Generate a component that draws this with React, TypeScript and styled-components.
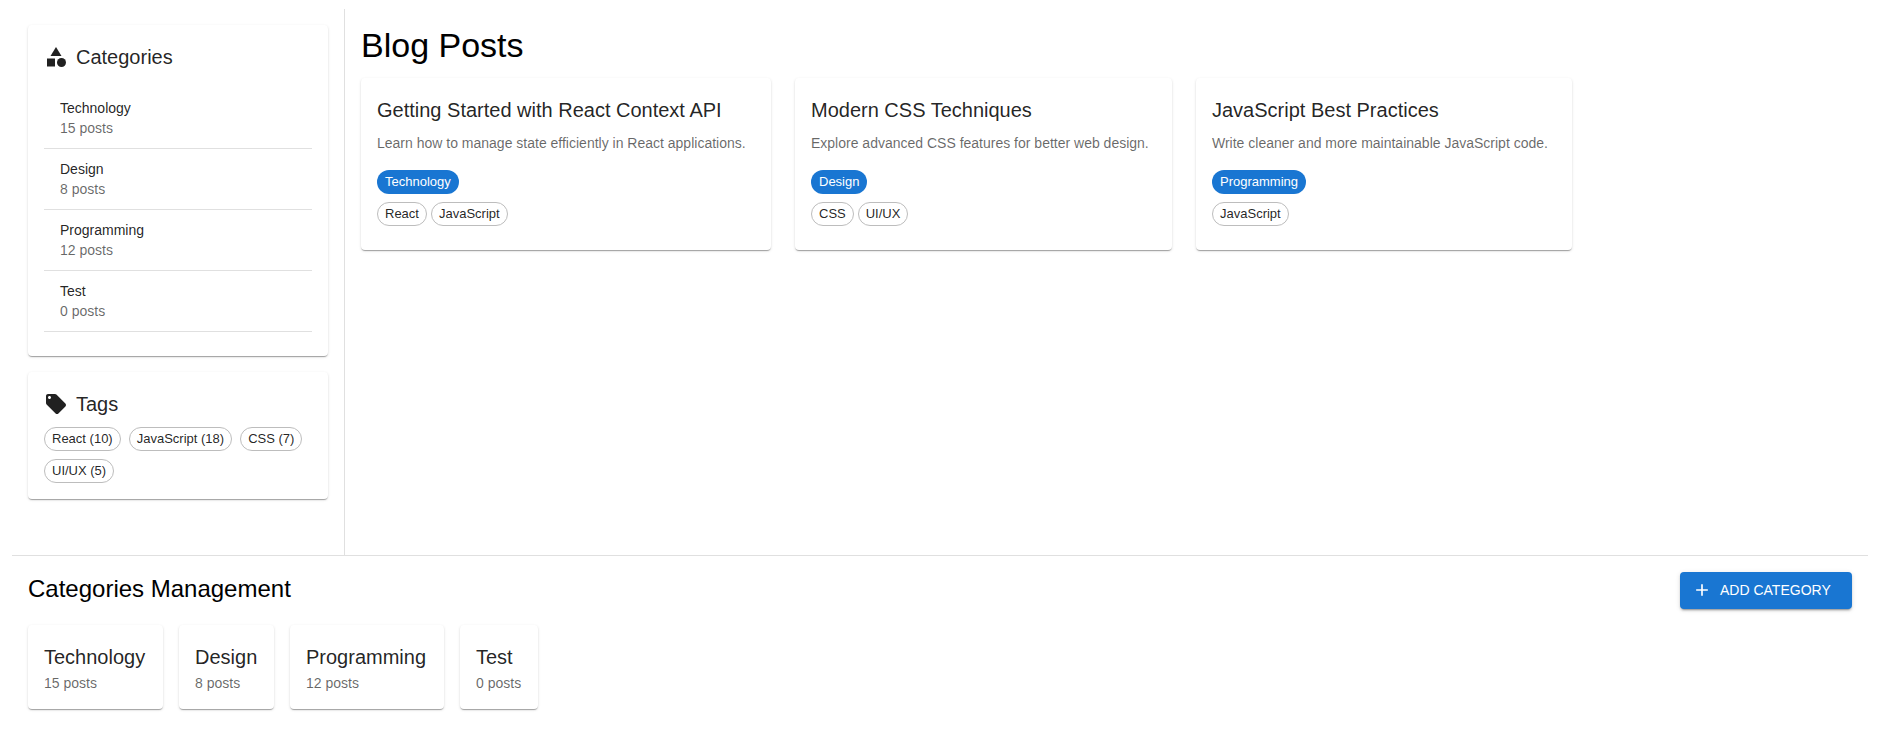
import React from "react";
import styled, { createGlobalStyle } from "styled-components";

const GlobalStyle = createGlobalStyle`
  *, *::before, *::after { box-sizing: border-box; }
  body {
    margin: 0;
    padding: 9px 10px 16px 12px;
    background: #fff;
    color: #000;
    font-family: Arial, "Liberation Sans", Helvetica, sans-serif;
    font-size: 14px;
    line-height: 20px;
  }
  h1, h2, h3, p, ul { margin: 0; padding: 0; font-weight: 400; }
  ul { list-style: none; }
`;

const TopRow = styled.div`
  display: flex;
  min-height: 546px;
`;

const Sidebar = styled.aside`
  display: flex;
  flex-direction: column;
  gap: 16px;
  flex: 0 0 333px;
  padding: 16px;
  border-right: 1px solid #e0e0e0;
`;

const Main = styled.main`
  flex: 1;
  min-width: 0;
  padding: 16px;
`;

const Card = styled.section`
  padding: 16px;
  border-radius: 4px;
  background: #fff;
  color: rgba(0, 0, 0, 0.87);
  box-shadow: 0 2px 1px -1px rgba(0, 0, 0, 0.2), 0 1px 1px 0 rgba(0, 0, 0, 0.14),
    0 1px 3px 0 rgba(0, 0, 0, 0.12);
`;

const PostCard = styled(Card).attrs({ as: "article" })<{ $width: number }>`
  flex: 0 1 ${(p) => p.$width}px;
  padding-bottom: 24px;
`;

const SummaryCard = styled(Card).attrs({ as: "li" })<{ $width: number }>`
  min-width: ${(p) => p.$width}px;
`;

const PageTitle = styled.h1`
  margin-bottom: 13px;
  font-size: 34px;
  line-height: 40px;
`;

const SectionTitle = styled.h2`
  font-size: 24px;
  line-height: 34px;
`;

const CardTitle = styled.h2<{ $gutter?: boolean }>`
  display: flex;
  align-items: center;
  gap: 8px;
  margin-bottom: ${(p) => (p.$gutter ? 7 : 0)}px;
  font-size: 20px;
  line-height: 32px;
`;

const Muted = styled.p`
  color: rgba(0, 0, 0, 0.6);
`;

const Excerpt = styled(Muted)`
  margin-bottom: 17px;
`;

const CategoryList = styled.ul`
  padding: 8px 0;
`;

const CategoryItem = styled.li`
  padding: 10px 16px;
  border-bottom: 1px solid #e0e0e0;
`;

const Icon = styled.svg<{ $size: number }>`
  flex: none;
  width: ${(p) => p.$size}px;
  height: ${(p) => p.$size}px;
  fill: currentColor;
`;

const Chips = styled.div<{ $gap: number }>`
  display: flex;
  flex-wrap: wrap;
  gap: ${(p) => p.$gap}px;
`;

const Chip = styled.span<{ $filled?: boolean }>`
  display: inline-flex;
  align-items: center;
  height: 24px;
  padding: 0 ${(p) => (p.$filled ? 8 : 7)}px;
  border: ${(p) => (p.$filled ? "none" : "1px solid #bdbdbd")};
  border-radius: 12px;
  background: ${(p) => (p.$filled ? "#1976d2" : "transparent")};
  color: ${(p) => (p.$filled ? "#fff" : "rgba(0, 0, 0, 0.87)")};
  font-size: 13px;
  white-space: nowrap;
`;

const PostLabels = styled.div`
  display: flex;
  flex-direction: column;
  align-items: flex-start;
  gap: 8px;
`;

const PostRow = styled.div`
  display: flex;
  gap: 24px;
`;

const Management = styled.section`
  padding: 16px;
  border-top: 1px solid #e0e0e0;
`;

const ManagementHeader = styled.header`
  display: flex;
  align-items: flex-start;
  justify-content: space-between;
  margin-bottom: 16px;
`;

const SummaryRow = styled.ul`
  display: flex;
  flex-wrap: wrap;
  gap: 16px;
`;

const AddButton = styled.button`
  display: inline-flex;
  align-items: center;
  gap: 8px;
  min-width: 172px;
  height: 37px;
  padding: 0 16px 1px 12px;
  border: 0;
  border-radius: 4px;
  background: #1976d2;
  color: #fff;
  font: inherit;
  text-transform: uppercase;
  cursor: pointer;
  box-shadow: 0 3px 1px -2px rgba(0, 0, 0, 0.2), 0 2px 2px 0 rgba(0, 0, 0, 0.14),
    0 1px 5px 0 rgba(0, 0, 0, 0.12);
`;

const categories = [
  { name: "Technology", count: 15, width: 135 },
  { name: "Design", count: 8, width: 95 },
  { name: "Programming", count: 12, width: 154 },
  { name: "Test", count: 0, width: 78 },
];

const tags = [
  { name: "React", count: 10 },
  { name: "JavaScript", count: 18 },
  { name: "CSS", count: 7 },
  { name: "UI/UX", count: 5 },
];

const posts = [
  {
    title: "Getting Started with React Context API",
    excerpt: "Learn how to manage state efficiently in React applications.",
    category: "Technology",
    tags: ["React", "JavaScript"],
    width: 410,
  },
  {
    title: "Modern CSS Techniques",
    excerpt: "Explore advanced CSS features for better web design.",
    category: "Design",
    tags: ["CSS", "UI/UX"],
    width: 377,
  },
  {
    title: "JavaScript Best Practices",
    excerpt: "Write cleaner and more maintainable JavaScript code.",
    category: "Programming",
    tags: ["JavaScript"],
    width: 376,
  },
];

export default function App() {
  return (
    <>
      <GlobalStyle />
      <TopRow>
        <Sidebar>
          <Card>
            <CardTitle $gutter>
              <Icon $size={24} viewBox="0 0 24 24" aria-hidden="true">
                <path d="m12 2-5.5 9h11z" />
                <circle cx="17.5" cy="17.5" r="4.5" />
                <path d="M3 13.5h8v8H3z" />
              </Icon>
              Categories
            </CardTitle>
            <CategoryList>
              {categories.map((c) => (
                <CategoryItem key={c.name}>
                  <p>{c.name}</p>
                  <Muted>{`${c.count} posts`}</Muted>
                </CategoryItem>
              ))}
            </CategoryList>
          </Card>
          <Card>
            <CardTitle $gutter>
              <Icon $size={24} viewBox="0 0 24 24" aria-hidden="true">
                <path d="m21.41 11.58-9-9C12.05 2.22 11.55 2 11 2H4c-1.1 0-2 .9-2 2v7c0 .55.22 1.05.59 1.42l9 9c.36.36.86.58 1.41.58s1.05-.22 1.41-.59l7-7c.37-.36.59-.86.59-1.41s-.23-1.06-.59-1.42M5.5 7C4.67 7 4 6.33 4 5.5S4.67 4 5.5 4 7 4.67 7 5.5 6.33 7 5.5 7" />
              </Icon>
              Tags
            </CardTitle>
            <Chips $gap={8}>
              {tags.map((t) => (
                <Chip key={t.name}>{`${t.name} (${t.count})`}</Chip>
              ))}
            </Chips>
          </Card>
        </Sidebar>
        <Main>
          <PageTitle>Blog Posts</PageTitle>
          <PostRow>
            {posts.map((post) => (
              <PostCard key={post.title} $width={post.width}>
                <CardTitle $gutter>{post.title}</CardTitle>
                <Excerpt>{post.excerpt}</Excerpt>
                <PostLabels>
                  <Chip $filled>{post.category}</Chip>
                  <Chips $gap={4}>
                    {post.tags.map((t) => (
                      <Chip key={t}>{t}</Chip>
                    ))}
                  </Chips>
                </PostLabels>
              </PostCard>
            ))}
          </PostRow>
        </Main>
      </TopRow>
      <Management>
        <ManagementHeader>
          <SectionTitle>Categories Management</SectionTitle>
          <AddButton type="button">
            <Icon $size={20} viewBox="0 0 24 24" aria-hidden="true">
              <path d="M19 13h-6v6h-2v-6H5v-2h6V5h2v6h6z" />
            </Icon>
            Add Category
          </AddButton>
        </ManagementHeader>
        <SummaryRow>
          {categories.map((c) => (
            <SummaryCard key={c.name} $width={c.width}>
              <CardTitle as="h3">{c.name}</CardTitle>
              <Muted>{`${c.count} posts`}</Muted>
            </SummaryCard>
          ))}
        </SummaryRow>
      </Management>
    </>
  );
}
